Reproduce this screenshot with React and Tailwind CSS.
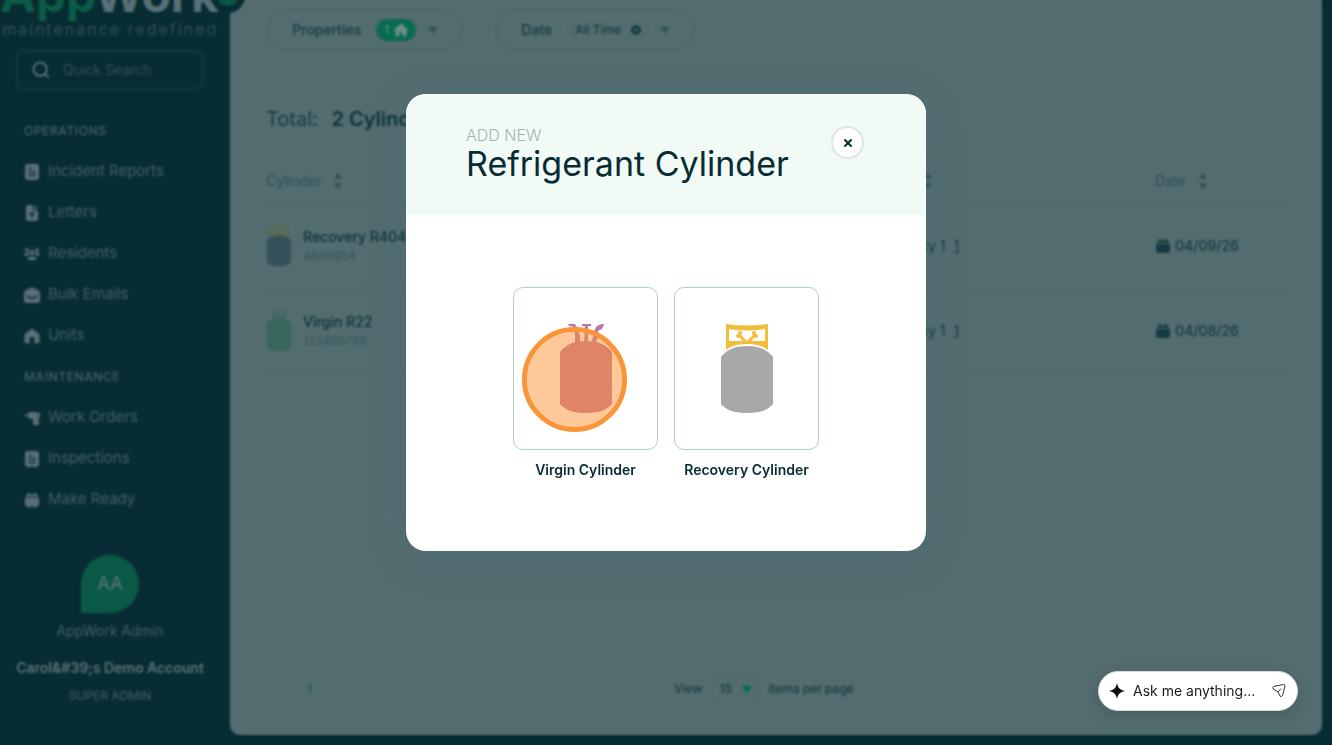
import React, { useState } from "react";
import { Search, X } from "lucide-react";
import { FaHouse, FaCircleXmark } from "react-icons/fa6";

const ReportIcon = () => (
  <svg viewBox="0 0 16 16" className="size-4" fill="currentColor">
    <rect x="1" width="14" height="16" rx="3" />
    <path d="M4.500 4.500h3M4.500 8h7M4.500 11.500h7" stroke="#082c33" strokeWidth="1.500" />
  </svg>
);

const LetterIcon = () => (
  <svg viewBox="0 0 16 16" className="size-4" fill="currentColor">
    <path
      fillRule="evenodd"
      d="M4 0h5v4a1.500 1.500 0 0 0 1.500 1.500H14V13.500A2.500 2.500 0 0 1 11.500 16h-7A2.500 2.500 0 0 1 2 13.500v-11A2.500 2.500 0 0 1 4 0Zm6.500 0L14 4h-3.500ZM8 6.500 4.800 10h2.400v2.500h1.600V10h2.400Z"
    />
  </svg>
);

const ResidentsIcon = () => (
  <svg viewBox="0 0 16 16" className="size-4" fill="currentColor">
    <circle cx="3" cy="4" r="1.900" />
    <circle cx="13" cy="4" r="1.900" />
    <circle cx="8" cy="6.500" r="2.400" />
    <path d="M0 9.500C0 7.500 1.500 6.500 3.500 6.500c.8 0 1.300.2 1.500.5 0 1.500.4 2 1 2.500ZM16 9.500c0-2-1.500-3-3.500-3-.8 0-1.300.2-1.500.5 0 1.500-.4 2-1 2.500ZM3.500 14c0-2.500 2-3.700 4.500-3.700s4.500 1.200 4.500 3.700Z" />
  </svg>
);

const EmailIcon = () => (
  <svg viewBox="0 0 16 16" className="size-4" fill="currentColor">
    <path d="M8 0 15 4a2 2 0 0 1 1 1.700V13.500A2.500 2.500 0 0 1 13.500 16h-11A2.500 2.500 0 0 1 0 13.500V5.700A2 2 0 0 1 1 4Z" />
    <path d="m2.500 8.500 3.500 2.500q2 1 4 0l3.500-2.500" fill="none" stroke="#082c33" strokeWidth="1.500" />
  </svg>
);

const HomeIcon = () => (
  <svg viewBox="0 0 16 16" className="size-4" fill="currentColor">
    <path d="M8 .5 14.500 5.500a2 2 0 0 1 1 1.800V13a2.500 2.500 0 0 1-2.500 2.500H10.500V11.500a2.500 2.500 0 0 0-5 0v4H3A2.500 2.500 0 0 1 .5 13V7.300a2 2 0 0 1 1-1.800Z" />
  </svg>
);

const DrillIcon = () => (
  <svg viewBox="0 0 16 16" className="size-4" fill="currentColor">
    <path d="M0 4.500h4V3.500L6 2h6l1 1h3v4l-1.500 1 .5 5.500a1.500 1.500 0 0 1-1.500 1.500h-3A1.500 1.500 0 0 1 9 13.500V9H6L4 7.500V6H0Z" />
  </svg>
);

const CalendarIcon = () => (
  <svg viewBox="0 0 16 16" className="size-4" fill="currentColor">
    <path d="M4 1h2v1.500h4V1h2v1.500A3 3 0 0 1 14.500 5h-13A3 3 0 0 1 4 2.500ZM1 6h14v6a3 3 0 0 1-3 3H4a3 3 0 0 1-3-3Z" />
  </svg>
);

const SortIcon = () => (
  <svg viewBox="0 0 10 18" className="h-[18px] w-[10px]" fill="currentColor">
    <path d="M5 1 9 6.500H1ZM5 17 1 11.500h8Z" />
  </svg>
);

const CaretIcon = () => (
  <svg viewBox="0 0 10 8" className="h-2 w-[10px]" fill="currentColor">
    <path d="M2 .5h6a1.500 1.500 0 0 1 1.200 2.400L6 7a1.200 1.200 0 0 1-2 0L.8 2.900A1.500 1.500 0 0 1 2 .5Z" />
  </svg>
);

const VirginCylinder = ({ className, body, valve }) => (
  <svg viewBox="0 0 52 90" className={className}>
    <g fill={valve}>
      <path d="M8 0h7l2 4-3-1-5-1ZM22 0h9v2h-9ZM35 7c0-5 4-7 9-7-1 5-4 7-9 7Z" />
      <path d="M13 3h3l4 8v10h-5V10ZM25 2h3v19h-4ZM35 5l3 2v6l-3 8h-4l2-8Z" />
    </g>
    <path
      d="M0 28C6 20 15 17 26 17s20 3 26 11v52c-6 7-15 9-26 9S6 87 0 80Z"
      fill={body}
    />
  </svg>
);

const RecoveryCylinder = ({ className, body, valve, gap }) => (
  <svg viewBox="0 0 52 90" className={className}>
    <path
      fillRule="evenodd"
      fill={valve}
      d="M5 0c14 2 28 2 42 0v26H5ZM8 5v12h36V5c-12 2-24 2-36 0Z"
    />
    <g stroke={valve} strokeWidth="3" fill={valve}>
      <path d="m18 11 13 13M34 11 21 24" />
      <circle cx="19" cy="9" r="1" strokeWidth="2" />
      <circle cx="17" cy="12" r="1" strokeWidth="2" />
      <circle cx="33" cy="9" r="1" strokeWidth="2" />
      <circle cx="35" cy="12" r="1" strokeWidth="2" />
    </g>
    <path d="M0 31C6 23 15 20 26 20s20 3 26 11v45H0Z" fill={gap} />
    <path
      d="M0 33C6 25 15 22 26 22s20 3 26 11v47c-6 7-15 9-26 9S6 87 0 80Z"
      fill={body}
    />
  </svg>
);

const menu = [
  {
    title: "OPERATIONS",
    items: [
      { label: "Incident Reports", icon: ReportIcon },
      { label: "Letters", icon: LetterIcon },
      { label: "Residents", icon: ResidentsIcon },
      { label: "Bulk Emails", icon: EmailIcon },
      { label: "Units", icon: HomeIcon },
    ],
  },
  {
    title: "MAINTENANCE",
    items: [
      { label: "Work Orders", icon: DrillIcon },
      { label: "Inspections", icon: ReportIcon },
      { label: "Make Ready", icon: CalendarIcon },
    ],
  },
];

const cylinders = [
  { name: "Recovery R404A", serial: "4645954", type: "recovery", date: "04/09/26" },
  { name: "Virgin R22", serial: "123456789", type: "virgin", date: "04/08/26" },
];

const Sidebar = () => (
  <aside className="relative z-10 w-[230px] shrink-0 text-[#405e64]">
    <div className="relative -mt-[29px] h-[65px]">
      <div className="text-5xl leading-[48px] font-bold whitespace-nowrap text-[#587075]">
        <span className="text-[#0b5b47]">App</span>Work
      </div>
      <div className="pl-[2px] text-base leading-5 tracking-[2px] whitespace-nowrap text-[#304e54]">
        maintenance redefined
      </div>
      {/* logo badge hangs over the content panel */}
      <svg viewBox="0 0 36 36" className="absolute top-[7px] left-[210px] size-9">
        <circle cx="18" cy="18" r="17" fill="#082c33" />
        <path d="M9 14h18v9l-4 4H13l-4-4Z" fill="#0b5b47" />
        <path d="m14 24 3-6m3 6 3-6" stroke="#082c33" />
      </svg>
    </div>

    <div className="w-[220px]">
      <label className="mt-[14px] ml-4 flex h-10 w-[188px] items-center gap-3 rounded-lg border-2 border-[#12383f] pl-[13px]">
        <Search className="size-5 shrink-0 text-[#60787c]" />
        <input
          type="text"
          aria-label="Quick Search"
          placeholder="Quick Search"
          className="w-full min-w-0 bg-transparent text-sm outline-none placeholder:text-[#304e54]"
        />
      </label>

      <nav className="mt-5">
        {menu.map((group) => (
          <div key={group.title}>
            <h2 className="flex h-[41px] items-center pl-6 text-xs font-medium tracking-wider">
              {group.title}
            </h2>
            {group.items.map((item) => (
              <a key={item.label} href="#" className="flex h-[41px] items-center gap-2 pl-6 text-[15px]">
                <span className="text-[#587075]">
                  <item.icon />
                </span>
                {item.label}
              </a>
            ))}
          </div>
        ))}
      </nav>

      {/* USER */}
      <div className="mt-[35px] flex flex-col items-center text-center">
        <div className="flex size-[58px] items-center justify-center rounded-full rounded-bl-none bg-[#0a5846] text-lg font-medium text-[#4f756d]">
          AA
        </div>
        <p className="mt-2 text-sm">AppWork Admin</p>
        <p className="mt-[17px] text-sm font-semibold whitespace-nowrap text-[#587075]">
          {"Carol&#39;s Demo Account"}
        </p>
        <p className="mt-2 text-xs leading-5">SUPER ADMIN</p>
      </div>
    </div>
  </aside>
);

const Filters = () => (
  <div className="flex gap-8">
    <button className="flex h-[42px] items-center rounded-full border-2 border-[#4b686b] pr-[23px] pl-6 text-sm font-medium text-[#173e44]">
      Properties
      <span className="ml-[15px] flex h-[22px] items-center gap-[5px] rounded-full bg-[#0a6b50] px-2 text-xs text-[#53907f]">
        1 <FaHouse className="size-[14px] text-[#6c9088]" />
      </span>
      <span className="ml-3 text-[#35575c]">
        <CaretIcon />
      </span>
    </button>
    <button className="flex h-[42px] items-center rounded-full border-2 border-[#4b686b] pr-[23px] pl-6 text-sm font-medium text-[#173e44]">
      Date
      <span className="ml-3 flex h-7 items-center gap-[10px] rounded-full border border-[#5c7679] px-[10px] text-xs">
        All Time <FaCircleXmark className="size-[10px]" />
      </span>
      <span className="ml-2 text-[#35575c]">
        <CaretIcon />
      </span>
    </button>
  </div>
);

const CylinderTable = () => (
  <table className="mt-[26px] w-full table-fixed text-left text-sm">
    <colgroup>
      <col />
      <col className="w-[301px]" />
      <col className="w-[131px]" />
    </colgroup>
    <thead>
      <tr className="h-[43px] border-b border-[#47636a] text-[#2f5057]">
        {["Cylinder", "Property", "Date"].map((title) => (
          <th key={title} className="p-0 font-normal">
            <span className="flex items-center gap-3">
              {title} <SortIcon />
            </span>
          </th>
        ))}
      </tr>
    </thead>
    <tbody>
      {cylinders.map((c) => (
        <tr key={c.serial} className="h-[85px] border-b border-[#47636a] text-[#143b42]">
          <td className="p-0">
            <div className="flex items-center gap-3 pl-px">
              {c.type === "recovery" ? (
                <RecoveryCylinder className="h-[42px] w-6" body="#35525a" valve="#5c6a40" gap="#536c70" />
              ) : (
                <VirginCylinder className="h-[42px] w-6" body="#37665a" valve="#37665a" />
              )}
              <div>
                <p className="font-medium text-[#0d353c]">{c.name}</p>
                <p className="text-xs leading-[18px] text-[#34555b]">{c.serial}</p>
              </div>
            </div>
          </td>
          <td className="p-0">
            My Property 1 <span className="ml-1 underline">1</span>
          </td>
          <td className="p-0">
            <span className="flex items-center gap-1 font-medium">
              <CalendarIcon /> {c.date}
            </span>
          </td>
        </tr>
      ))}
    </tbody>
  </table>
);

const Pagination = () => (
  <div className="mt-auto mb-[30px] grid grid-cols-[1fr_auto_1fr] items-center pr-6 text-xs font-medium text-[#173e44]">
    <a href="#" className="pl-[41px] text-[#0d5a50]">
      1
    </a>
    <div className="flex items-center gap-[10px]">
      <label htmlFor="page-size">View</label>
      <div className="relative">
        <select
          id="page-size"
          className="h-8 w-[46px] appearance-none rounded-md border border-[#4a6769] pl-[6px]"
        >
          <option>15</option>
        </select>
        <span className="pointer-events-none absolute top-3 right-[6px] text-[#0a6b50]">
          <CaretIcon />
        </span>
      </div>
      <span>items per page</span>
    </div>
  </div>
);

const cardStyle =
  "flex h-[163px] w-[145px] items-center justify-center rounded-[10px] border border-[#aed2c6] bg-white";

const AddCylinderModal = ({ onClose }) => (
  <div className="fixed inset-0 z-20 flex items-start justify-center pt-[94px] backdrop-blur-[1px]">
    <div
      role="dialog"
      aria-label="Add new refrigerant cylinder"
      className="w-[520px] overflow-hidden rounded-[20px] bg-white text-[#082c33] shadow-[0_8px_40px_rgba(70,110,120,0.2)]"
    >
      <div className="flex items-start justify-between bg-[#f2faf6] pt-8 pr-[62px] pb-[31px] pl-[60px]">
        <div>
          <p className="text-base leading-[18px] font-light text-[#a5b3b0]">ADD NEW</p>
          <h1 className="text-[34px] leading-10">Refrigerant Cylinder</h1>
        </div>
        <button
          aria-label="Close"
          onClick={onClose}
          className="flex size-[33px] items-center justify-center rounded-full border-2 border-[#e2e4e4] bg-white"
        >
          <X className="size-3" strokeWidth={4} />
        </button>
      </div>
      <div className="flex justify-center gap-4 pt-[72px] pb-[71px]">
        <button className="relative text-sm font-semibold">
          <span className={cardStyle}>
            <VirginCylinder className="h-[90px] w-[52px]" body="#c57599" valve="#b977a9" />
          </span>
          <span className="mt-[10px] block">Virgin Cylinder</span>
          {/* click highlight */}
          <span className="absolute top-10 left-[9px] size-[105px] rounded-full border-[5px] border-[#fb9337] bg-[#fb9337]/50 bg-clip-padding" />
        </button>
        <button className="text-sm font-semibold">
          <span className={cardStyle}>
            <RecoveryCylinder className="h-[90px] w-[52px]" body="#a8a8a8" valve="#f1bd3b" gap="#ffffff" />
          </span>
          <span className="mt-[10px] block">Recovery Cylinder</span>
        </button>
      </div>
    </div>
  </div>
);

const AskBar = () => (
  <form className="fixed right-[34px] bottom-[34px] z-30 flex h-10 w-[200px] items-center rounded-full border border-[#d5dbdc] bg-white px-[10px] text-black shadow-[0_4px_16px_rgba(0,0,0,0.15)]">
    <svg viewBox="0 0 16 16" className="size-4 shrink-0" fill="#111111">
      <path d="M8 0c1 5 3 7 8 8-5 1-7 3-8 8-1-5-3-7-8-8 5-1 7-3 8-8Z" />
    </svg>
    <input
      type="text"
      aria-label="Ask me anything"
      placeholder="Ask me anything..."
      className="ml-2 min-w-0 flex-1 bg-transparent text-sm outline-none placeholder:text-[#1a1a1a]"
    />
    <button type="button" aria-label="Send">
      <svg viewBox="0 0 16 16" className="size-4" fill="none" stroke="#333333" strokeLinejoin="round">
        <path d="M2.500 3.500 12.500 1.500q1.500 0 1.500 1.500L11.500 12.500q-1 2-2.500.5L7 9 2.500 6Q.5 4.500 2.500 3.500ZM7 9l3-3.500" />
      </svg>
    </button>
  </form>
);

const App = () => {
  const [open, setOpen] = useState(true);

  return (
    <div className="flex min-h-screen overflow-hidden bg-[#082c33] font-['Inter',sans-serif]">
      <Sidebar />
      <main className="mr-[10px] mb-[10px] flex flex-1 flex-col rounded-b-[10px] bg-[#536c70] px-9 pt-[9px]">
        <Filters />
        <p className="mt-[53px] text-xl leading-[30px] text-[#173e44]">
          Total: <span className="ml-2 font-semibold text-[#0d353c]">2 Cylinders</span>
        </p>
        <CylinderTable />
        <Pagination />
      </main>
      {open && <AddCylinderModal onClose={() => setOpen(false)} />}
      <AskBar />
    </div>
  );
};

export default App;
